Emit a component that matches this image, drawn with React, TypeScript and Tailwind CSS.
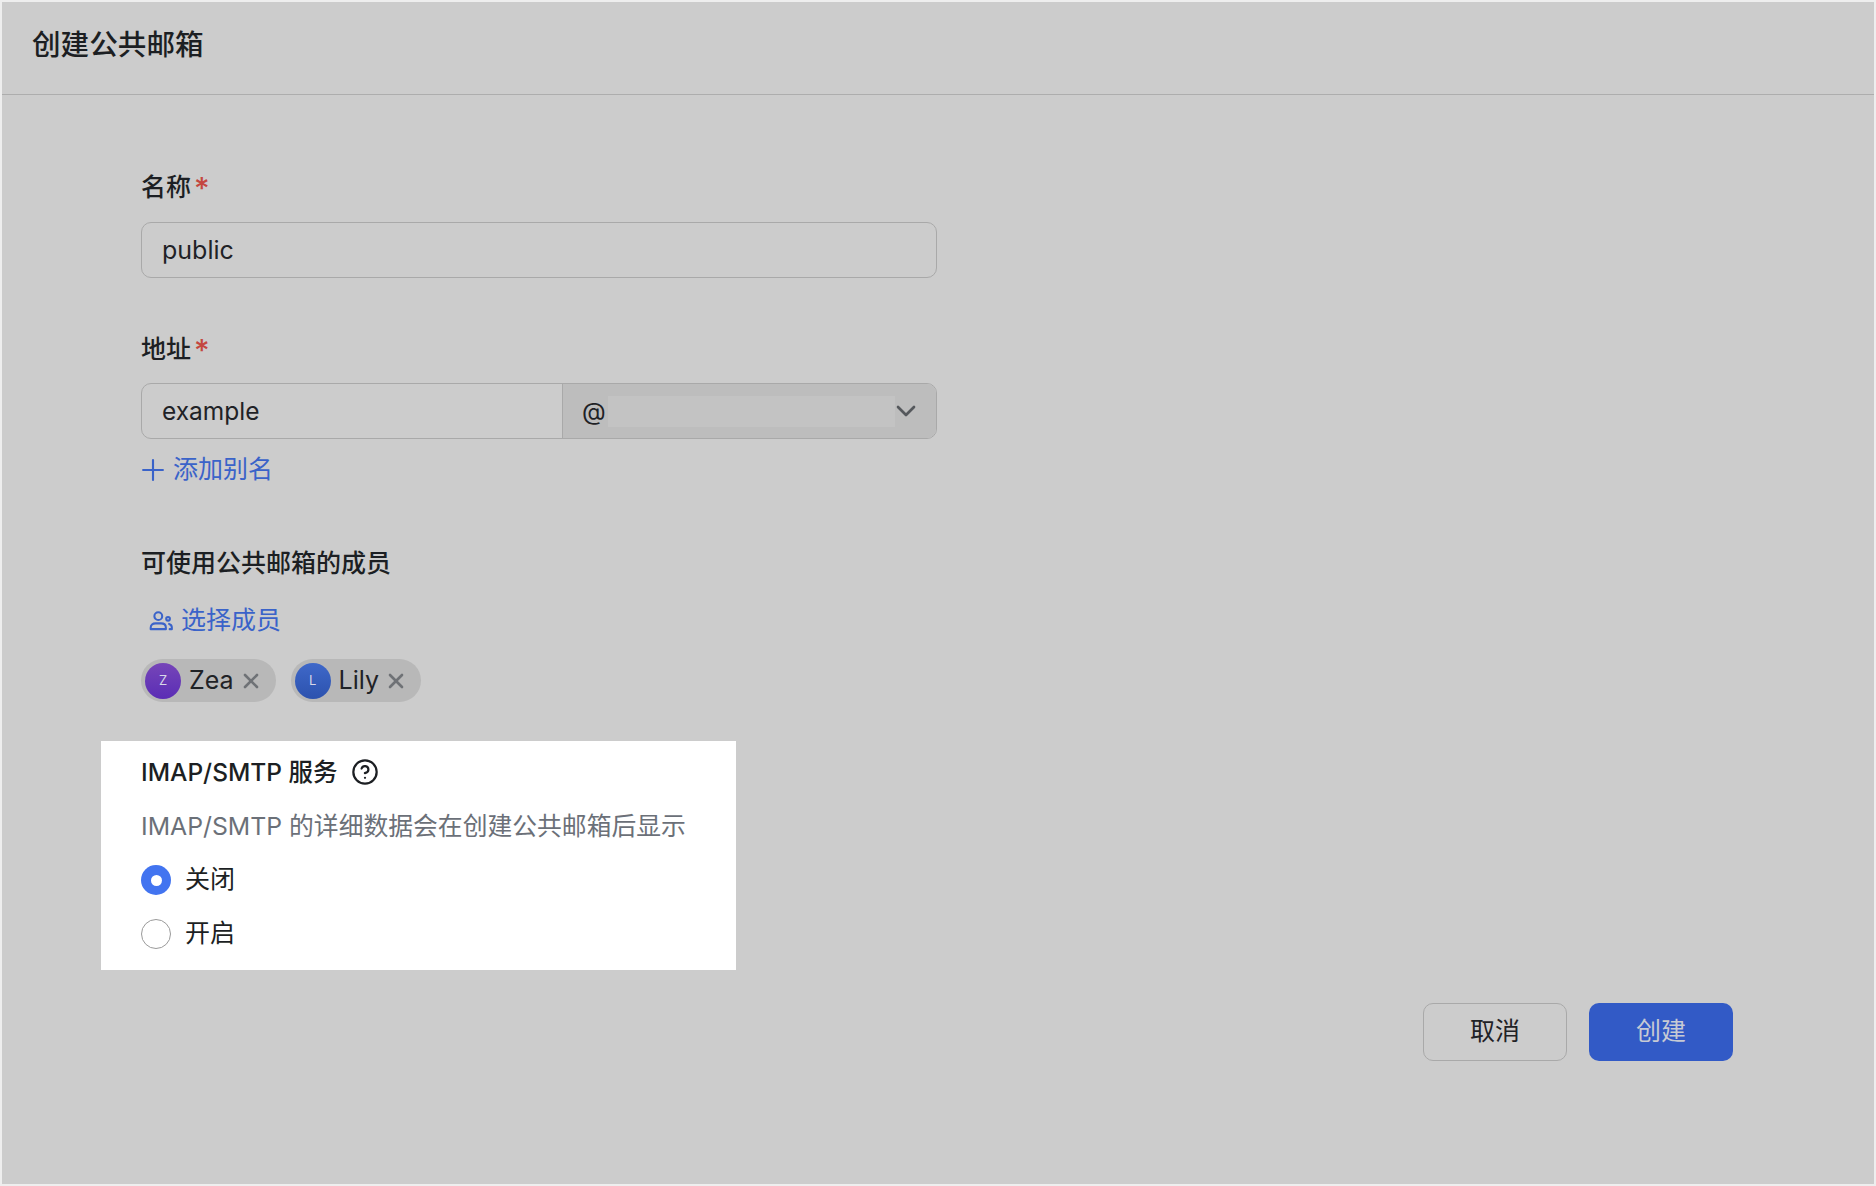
import { ChevronDown, Plus, X, CircleHelp } from "lucide-react";

const font = "font-['Inter','Noto_Sans_CJK_SC',sans-serif]";

function Label({ text, required }: { text: string; required?: boolean }) {
  return (
    <div className="flex h-[34px] items-center pt-[1px] text-[25px] font-medium text-[#1c1f23]">
      {text}
      {required && <span className="ml-[3px] text-[30px] leading-none text-[#c4473f]">*</span>}
    </div>
  );
}

function Chip({ name, letter, avatar }: { name: string; letter: string; avatar: string }) {
  return (
    <div className="flex h-[43px] items-center rounded-full bg-[#b8b8b8] pl-[4px] pr-[13px]">
      <div className={`flex h-[36px] w-[36px] items-center justify-center rounded-full text-[13px] text-[#d8d8e8] ${avatar}`}>
        {letter}
      </div>
      <span className="ml-[8px] text-[25px] text-[#1f2226]">{name}</span>
      <X size={24} strokeWidth={2.6} className="ml-[5px] text-[#6f7276]" />
    </div>
  );
}

function MembersIcon() {
  return (
    <svg width="26" height="26" viewBox="0 0 24 24" fill="none" stroke="currentColor" strokeWidth="1.9" strokeLinejoin="round" strokeLinecap="round">
      <circle cx="9.5" cy="7.5" r="3.6" />
      <path d="M2.5 19.5v-1.3c0-2.5 1.7-4 4.5-4h5c2.8 0 4.5 1.5 4.5 4v1.3z" />
      <circle cx="18.5" cy="10" r="1.7" />
      <path d="M19.5 14.7c1.5.4 2.5 1.6 2.5 3.3v1.5h-2" />
    </svg>
  );
}

export default function App() {
  return (
    <div className={`${font} flex h-[1186px] w-full flex-col border-2 border-[#eeeeee] bg-[#cccccc]`}>
      <header className="flex h-[93px] shrink-0 items-center border-b border-[#adadad] pb-[6px] pl-[30px]">
        <h1 className="text-[28.6px] font-medium text-[#1c1f23]">创建公共邮箱</h1>
      </header>

      <main className="flex flex-1 flex-col pl-[139px] pt-[75px]">
        <section className="w-[796px]">
          <Label text="名称" required />
          <div className="mt-[18px] flex h-[56px] items-center rounded-[10px] border border-[#a9a9a9] pl-[20px] pt-[2px] text-[25px] text-[#1f2226]">
            public
          </div>
        </section>

        <section className="mt-[54px] w-[796px]">
          <Label text="地址" required />
          <div className="mt-[17px] flex h-[56px] overflow-hidden rounded-[10px] border border-[#a9a9a9] text-[24.5px] text-[#1f2226]">
            <div className="flex w-[421px] items-center border-r border-[#a9a9a9] pl-[20px] pt-[1px]">example</div>
            <div className="flex flex-1 items-center bg-[#bdbdbd] pl-[19px]">
              @
              <div className="ml-[2px] h-[31px] w-[287px] bg-[#c3c3c3]" />
              <ChevronDown size={32} strokeWidth={2} className="-ml-[5px] text-[#55585c]" />
            </div>
          </div>
          <div className="mt-[14px] flex h-[34px] items-center text-[25px] text-[#3a63c9]">
            <Plus size={34} strokeWidth={1.5} className="-ml-[5px]" />
            <span className="ml-[3px]">添加别名</span>
          </div>
        </section>

        <section className="mt-[60px]">
          <div className="flex h-[34px] items-center text-[25px] font-medium text-[#1c1f23]">可使用公共邮箱的成员</div>
          <div className="mt-[23px] flex h-[34px] items-center pl-[7px] text-[25px] text-[#3a63c9]">
            <MembersIcon />
            <span className="ml-[7px]">选择成员</span>
          </div>
          <div className="mt-[21px] flex gap-[15px]">
            <Chip name="Zea" letter="Z" avatar="bg-gradient-to-b from-[#7645b8] to-[#5b2cb5]" />
            <Chip name="Lily" letter="L" avatar="bg-gradient-to-b from-[#3f68c9] to-[#2c52ae]" />
          </div>
        </section>

        <section className="-ml-[40px] mt-[39px] flex h-[229px] w-[635px] flex-col bg-white pl-[40px] pt-[14px]">
          <div className="flex h-[34px] items-center text-[24.5px] font-medium text-[#1c1f23]">
            IMAP/SMTP 服务
            <CircleHelp size={28} strokeWidth={1.9} className="ml-[13px]" />
          </div>
          <p className="mt-[20px] text-[24.8px] leading-[34px] text-[#6b7078]">IMAP/SMTP 的详细数据会在创建公共邮箱后显示</p>
          <div className="mt-[20px] flex h-[34px] items-center text-[25px] text-[#1c1f23]">
            <span className="flex h-[30px] w-[30px] items-center justify-center rounded-full bg-[#4274f0]">
              <span className="h-[11px] w-[11px] rounded-full bg-white" />
            </span>
            <span className="ml-[14px]">关闭</span>
          </div>
          <div className="mt-[20px] flex h-[34px] items-center text-[25px] text-[#1c1f23]">
            <span className="h-[30px] w-[30px] rounded-full border border-[#9a9a9a]" />
            <span className="ml-[14px]">开启</span>
          </div>
        </section>

        <div className="mt-[33px] flex justify-end gap-[22px] pr-[141px] text-[25px]">
          <button className="h-[58px] w-[144px] rounded-[10px] border border-[#a9a9a9] text-[#1f2226]">取消</button>
          <button className="h-[58px] w-[144px] rounded-[10px] bg-[#325ac6] text-[#c6cad4]">创建</button>
        </div>
      </main>
    </div>
  );
}
